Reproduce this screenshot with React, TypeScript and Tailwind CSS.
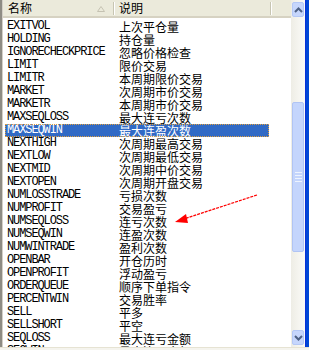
const rows: [string, string][] = [
  ['EXITVOL', '上次平仓量'],
  ['HOLDING', '持仓量'],
  ['IGNORECHECKPRICE', '忽略价格检查'],
  ['LIMIT', '限价交易'],
  ['LIMITR', '本周期限价交易'],
  ['MARKET', '次周期市价交易'],
  ['MARKETR', '本周期市价交易'],
  ['MAXSEQLOSS', '最大连亏次数'],
  ['MAXSEQWIN', '最大连盈次数'],
  ['NEXTHIGH', '次周期最高交易'],
  ['NEXTLOW', '次周期最低交易'],
  ['NEXTMID', '次周期中价交易'],
  ['NEXTOPEN', '次周期开盘交易'],
  ['NUMLOSSTRADE', '亏损次数'],
  ['NUMPROFIT', '交易盈亏'],
  ['NUMSEQLOSS', '连亏次数'],
  ['NUMSEQWIN', '连盈次数'],
  ['NUMWINTRADE', '盈利次数'],
  ['OPENBAR', '开仓历时'],
  ['OPENPROFIT', '浮动盈亏'],
  ['ORDERQUEUE', '顺序下单指令'],
  ['PERCENTWIN', '交易胜率'],
  ['SELL', '平多'],
  ['SELLSHORT', '平空'],
  ['SEQLOSS', '最大连亏金额'],
  ['SEQWIN', '最大连盈金额'],
]

const SELECTED = 'MAXSEQWIN'

const cjk = "font-['Noto_Sans_CJK_SC',sans-serif]"
const mono = "font-['Liberation_Mono',monospace]"

function Chevron({ down }: { down?: boolean }) {
  return (
    <svg width="9" height="6" viewBox="0 0 9 6" className={down ? 'rotate-180' : ''}>
      <path d="M1 5 L4.5 1.5 L8 5" fill="none" stroke="#4d6185" strokeWidth="2" />
    </svg>
  )
}

function ScrollButton({ down }: { down?: boolean }) {
  return (
    <div className="mx-[1px] flex h-[15px] items-center justify-center rounded-[2px] border border-[#b4c8f6] bg-[#c6d6fc]">
      <Chevron down={down} />
    </div>
  )
}

/** Old-style XP list view: keyword / description, one row selected. */
export default function App() {
  return (
    <div className="relative flex h-[350px] w-[309px] flex-col overflow-hidden bg-white">
      <div className="flex min-h-0 flex-1">
        {/* left frame */}
        <div className="w-[3px] border-l-2 border-[#8e8c84] bg-[#d4d0c8]" />

        {/* list */}
        <div className="flex w-[288px] flex-col overflow-hidden">
          <div className={`flex h-[18px] shrink-0 items-center border-b-2 border-[#d6d2c2] bg-[#ebeadb] text-[12px] leading-[16px] text-black ${cjk}`}>
            <div className="relative flex h-full w-[110px] items-center pl-[5px]">
              名称
              <svg width="8" height="6" viewBox="0 0 8 6" className="absolute left-[94px] top-[6px]">
                <path d="M0.5 5.5 L4 0.5 L7.5 5.5 Z" fill="none" stroke="#c5c2b2" />
              </svg>
            </div>
            <div className="h-[13px] w-[2px] border-l border-r border-l-[#c7c5b2] border-r-white" />
            <div className="flex h-full w-[155px] items-center pl-[4px]">说明</div>
            <div className="h-[13px] w-[2px] border-l border-r border-l-[#c7c5b2] border-r-white" />
          </div>

          <div className="pt-[2px]">
            {rows.map(([key, desc]) => {
              const sel = key === SELECTED
              return (
                <div
                  key={key}
                  className={`ml-[2px] flex h-[13px] w-[264px] items-center ${
                    sel ? 'bg-[#316ac5] text-white outline-1 outline-dotted outline-offset-[-1px] outline-[#e0a040]' : 'text-black'
                  }`}
                >
                  <span className={`w-[114px] shrink-0 pl-[2px] text-[12px] leading-[13px] tracking-[-1.1px] ${mono}`}>{key}</span>
                  <span className={`text-[12px] leading-[13px] ${cjk}`}>{desc}</span>
                </div>
              )
            })}
          </div>
        </div>

        {/* scrollbar */}
        <div className="flex w-[14px] flex-col bg-gradient-to-r from-[#eeede5] to-[#fbfbf8] pt-[2px] pb-[2px]">
          <ScrollButton />
          <div className="h-[85px]" />
          <div className="mx-[1px] flex h-[150px] flex-col items-center justify-center gap-[2px] rounded-[2px] border border-[#b0c4f4] bg-[#c4d5fc]">
            <div className="h-px w-[7px] bg-[#eef4fe]" />
            <div className="h-px w-[7px] bg-[#eef4fe]" />
            <div className="h-px w-[7px] bg-[#eef4fe]" />
            <div className="h-px w-[7px] bg-[#eef4fe]" />
          </div>
          <div className="flex-1" />
          <ScrollButton down />
        </div>

        {/* window frame */}
        <div className="w-[4px] border-l border-[#0831d9] bg-[#0047d6]" />
      </div>

      {/* bottom edge */}
      <div className="h-[3px] border-t border-[#e6e3d3] bg-[#f5f4ee]" />

      {/* red annotation arrow */}
      <svg width="309" height="350" className="pointer-events-none absolute left-0 top-0">
        <line x1="257" y1="195" x2="184" y2="219" stroke="#ff0000" strokeWidth="1.3" strokeDasharray="3 1" />
        <path d="M175 222 L186 214 L188 223 Z" fill="#ff0000" />
      </svg>
    </div>
  )
}
